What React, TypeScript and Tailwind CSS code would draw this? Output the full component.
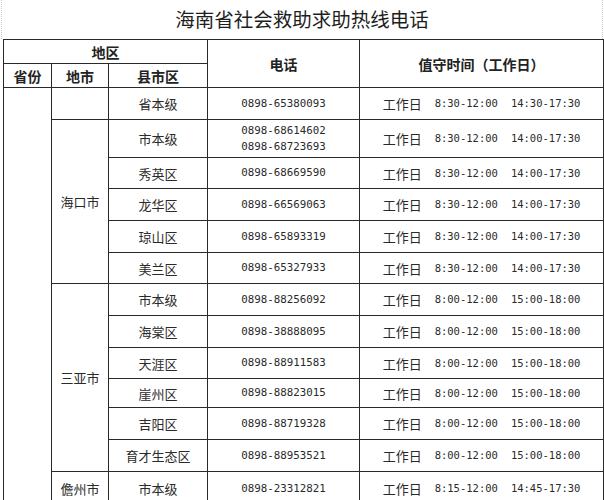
import React from "react";

type Row = {
  city?: { name: string; span: number } | "blank" | null;
  district: string;
  phones: string[];
  t1: string;
  t2: string;
  h: string;
};

const rows: Row[] = [
  { city: "blank", district: "省本级", phones: ["0898-65380093"], t1: "8:30-12:00", t2: "14:30-17:30", h: "h-[32px]" },
  { city: { name: "海口市", span: 5 }, district: "市本级", phones: ["0898-68614602", "0898-68723693"], t1: "8:30-12:00", t2: "14:00-17:30", h: "h-[38px]" },
  { city: null, district: "秀英区", phones: ["0898-68669590"], t1: "8:30-12:00", t2: "14:00-17:30", h: "h-[31px]" },
  { city: null, district: "龙华区", phones: ["0898-66569063"], t1: "8:30-12:00", t2: "14:00-17:30", h: "h-[32px]" },
  { city: null, district: "琼山区", phones: ["0898-65893319"], t1: "8:30-12:00", t2: "14:00-17:30", h: "h-[32px]" },
  { city: null, district: "美兰区", phones: ["0898-65327933"], t1: "8:30-12:00", t2: "14:00-17:30", h: "h-[31px]" },
  { city: { name: "三亚市", span: 6 }, district: "市本级", phones: ["0898-88256092"], t1: "8:00-12:00", t2: "15:00-18:00", h: "h-[32px]" },
  { city: null, district: "海棠区", phones: ["0898-38888095"], t1: "8:00-12:00", t2: "15:00-18:00", h: "h-[32px]" },
  { city: null, district: "天涯区", phones: ["0898-88911583"], t1: "8:00-12:00", t2: "15:00-18:00", h: "h-[31px]" },
  { city: null, district: "崖州区", phones: ["0898-88823015"], t1: "8:00-12:00", t2: "15:00-18:00", h: "h-[29px]" },
  { city: null, district: "吉阳区", phones: ["0898-88719328"], t1: "8:00-12:00", t2: "15:00-18:00", h: "h-[32px]" },
  { city: null, district: "育才生态区", phones: ["0898-88953521"], t1: "8:00-12:00", t2: "15:00-18:00", h: "h-[32px]" },
  { city: { name: "儋州市", span: 1 }, district: "市本级", phones: ["0898-23312821"], t1: "8:15-12:00", t2: "14:45-17:30", h: "h-[34px]" },
];

const cjk = "font-['Noto_Sans_CJK_SC','Noto_Sans',sans-serif]";
const mono = "font-['DejaVu_Sans_Mono','Liberation_Mono',monospace]";
const cell = "border border-[#2a2a2a] p-0 text-center align-middle";

export default function App() {
  return (
    <div className={`w-[604px] h-[500px] overflow-hidden bg-white text-[#222] ${cjk}`}>
      <div className="h-[39px] mx-[1px] border-x border-dotted border-[#c8c8c8] flex items-center justify-center">
        <span className="text-[19.5px] leading-none text-[#1e1e1e] mt-[-2px]">海南省社会救助求助热线电话</span>
      </div>
      <table className="ml-[3px] w-[600px] border-collapse table-fixed">
        <colgroup>
          <col className="w-[48px]" />
          <col className="w-[57px]" />
          <col className="w-[99px]" />
          <col className="w-[152px]" />
          <col className="w-[244px]" />
        </colgroup>
        <thead>
          <tr className="h-[24px]">
            <th colSpan={3} className={`${cell} text-[14px] font-bold leading-none`}>地区</th>
            <th rowSpan={2} className={`${cell} text-[14px] font-bold leading-none`}>电话</th>
            <th rowSpan={2} className={`${cell} text-[14px] font-bold leading-none`}>值守时间（工作日）</th>
          </tr>
          <tr className="h-[24px]">
            <th className={`${cell} text-[14px] font-bold leading-none`}>省份</th>
            <th className={`${cell} text-[14px] font-bold leading-none`}>地市</th>
            <th className={`${cell} text-[14px] font-bold leading-none`}>县市区</th>
          </tr>
        </thead>
        <tbody>
          {rows.map((r, i) => (
            <tr key={i} className={r.h}>
              {i === 0 && <td rowSpan={rows.length} className={cell}></td>}
              {r.city === "blank" && <td className={cell}></td>}
              {r.city && r.city !== "blank" && (
                <td rowSpan={r.city.span} className={`${cell} text-[13px] leading-none text-[#2a2a2a]`}>
                  {r.city.name}
                </td>
              )}
              <td className={`${cell} text-[13px] leading-none text-[#2a2a2a]`}>{r.district}</td>
              <td className={`${cell} ${mono} text-[10.8px] text-[#2a2a2a]`}>
                <div className="flex flex-col items-center leading-[16px]">
                  {r.phones.map((p) => (
                    <span key={p}>{p}</span>
                  ))}
                </div>
              </td>
              <td className={`${cell}`}>
                <div className="flex items-center justify-center gap-[13px] text-[#2a2a2a]">
                  <span className="text-[13px] leading-none">工作日</span>
                  <span className={`${mono} text-[10.5px] leading-none`}>{r.t1}</span>
                  <span className={`${mono} text-[10.5px] leading-none`}>{r.t2}</span>
                </div>
              </td>
            </tr>
          ))}
        </tbody>
      </table>
    </div>
  );
}
